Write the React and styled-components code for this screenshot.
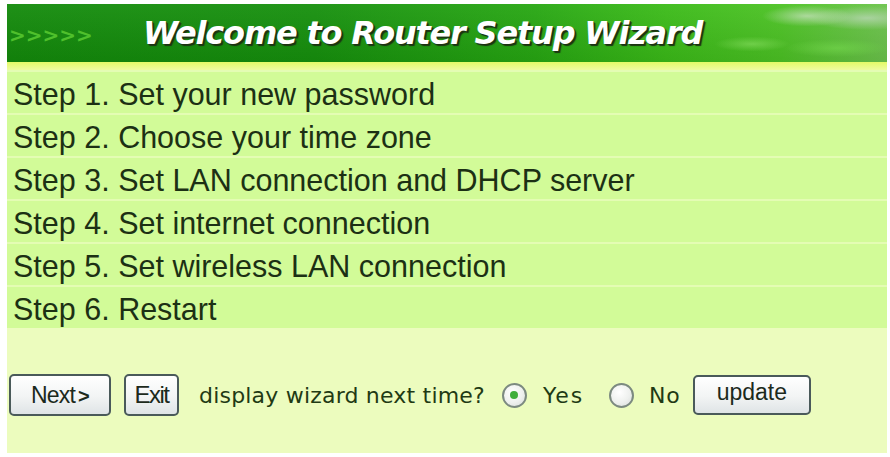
import React from 'react';
import styled, { createGlobalStyle } from 'styled-components';

const GlobalStyle = createGlobalStyle`
  html, body {
    margin: 0;
    padding: 0;
    background: #ffffff;
  }
  body {
    font-family: "Liberation Sans", Arial, sans-serif;
  }
`;

const Page = styled.div`
  width: 890px;
  height: 457px;
  padding: 4px 3px 4px 7px;
  box-sizing: border-box;
`;

const Frame = styled.div`
  display: flex;
  flex-direction: column;
  width: 880px;
  height: 449px;
`;

// ヘッダー
const Header = styled.div`
  display: flex;
  align-items: center;
  height: 58px;
  background:
    radial-gradient(ellipse 60px 14px at 800px 12px, rgba(200, 225, 190, 0.75), transparent 75%),
    radial-gradient(ellipse 80px 16px at 860px 14px, rgba(185, 215, 180, 0.8), transparent 75%),
    radial-gradient(ellipse 50px 10px at 745px 40px, rgba(150, 230, 110, 0.5), transparent 75%),
    radial-gradient(ellipse 70px 12px at 830px 44px, rgba(120, 220, 80, 0.55), transparent 75%),
    linear-gradient(180deg, rgba(255, 255, 255, 0.05) 0%, rgba(0, 0, 0, 0.08) 100%),
    linear-gradient(90deg, #138a0b 0%, #16900d 35%, #27a712 60%, #3bbb18 75%, #4cc224 88%, #6cc34c 100%);
`;

const Arrows = styled.span`
  width: 136px;
  margin-top: 4px;
  padding-left: 2px;
  box-sizing: border-box;
  font-family: "DejaVu Sans", Verdana, sans-serif;
  font-weight: bold;
  font-size: 20px;
  color: #4fc02c;
`;

const Title = styled.h1`
  margin: 0;
  font-family: "DejaVu Sans", Verdana, sans-serif;
  font-style: italic;
  font-weight: bold;
  font-size: 32px;
  letter-spacing: -1.2px;
  color: #ffffff;
  text-shadow: 2px 2px 1px #1c3412, 1px 1px 0 #2a4a1a;
  white-space: nowrap;
`;

const Strip = styled.div`
  height: 8px;
  background: linear-gradient(180deg, #e4fa66 0%, #eefca0 100%);
`;

const StepList = styled.div`
  display: flex;
  flex-direction: column;
  gap: 2px;
  padding-top: 2px;
  background: #e4fcb4;
`;

const StepRow = styled.div`
  display: flex;
  align-items: center;
  box-sizing: border-box;
  height: 41px;
  padding: 4px 0 0 6px;
  background: #d2fb98;
  font-size: 30.5px;
  color: #1c3014;
  white-space: nowrap;
`;

const Footer = styled.div`
  flex: 1;
  display: flex;
  align-items: center;
  padding: 9px 0 0 2px;
  background: #ecfcbe;
`;

const Button = styled.button`
  box-sizing: border-box;
  height: ${p => p.$h || 42}px;
  width: ${p => p.$w}px;
  margin-right: ${p => p.$mr || 0}px;
  padding: 0 0 ${p => p.$pb || 0}px;
  border: 2px solid #4a5a5a;
  border-radius: 5px;
  background: linear-gradient(180deg, #ffffff 0%, #f2f4f4 55%, #dfe4e6 100%);
  font-family: "Liberation Sans", Arial, sans-serif;
  font-size: ${p => p.$fs || 23}px;
  letter-spacing: ${p => p.$ls || 0}px;
  color: #1c2a1c;
  cursor: pointer;
`;

const Chevron = styled.b`
  font-size: 20px;
  margin-left: 3px;
`;

const Label = styled.span`
  font-family: "DejaVu Sans", Verdana, sans-serif;
  font-size: 22px;
  letter-spacing: ${p => p.$ls || 0.2}px;
  color: #1f3a14;
  margin-right: ${p => p.$mr || 0}px;
  margin-left: ${p => p.$ml || 0}px;
  white-space: nowrap;
`;

const Radio = styled.span`
  box-sizing: border-box;
  display: inline-flex;
  align-items: center;
  justify-content: center;
  width: 25px;
  height: 25px;
  border-radius: 50%;
  border: 2px solid #7c8a80;
  background: radial-gradient(circle at 40% 35%, #ffffff 0%, #eef0ee 55%, #d6dad8 100%);
  &::after {
    content: '';
    width: 8px;
    height: 8px;
    border-radius: 50%;
    background: ${p => (p.$checked ? '#3fae3a' : 'transparent')};
  }
`;

const steps = [
  'Step 1. Set your new password',
  'Step 2. Choose your time zone',
  'Step 3. Set LAN connection and DHCP server',
  'Step 4. Set internet connection',
  'Step 5. Set wireless LAN connection',
  'Step 6. Restart',
];

export default function App() {
  return (
    <Page>
      <GlobalStyle />
      <Frame>
        <Header>
          <Arrows>&gt;&gt;&gt;&gt;&gt;</Arrows>
          <Title>Welcome to Router Setup Wizard</Title>
        </Header>
        <Strip />
        <StepList>
          {steps.map(s => (
            <StepRow key={s}>{s}</StepRow>
          ))}
        </StepList>
        <Footer>
          <Button $w={102} $mr={13} $ls={-0.8}>Next<Chevron>&gt;</Chevron></Button>
          <Button $w={55} $mr={20} $ls={-1.5} $fs={24}>Exit</Button>
          <Label $mr={17}>display wizard next time?</Label>
          <Radio $checked />
          <Label $ml={16} $mr={25} $ls={1.8}>Yes</Label>
          <Radio />
          <Label $ml={15} $mr={12} $ls={1}>No</Label>
          <Button $w={118} $h={40} $pb={6}>update</Button>
        </Footer>
      </Frame>
    </Page>
  );
}
